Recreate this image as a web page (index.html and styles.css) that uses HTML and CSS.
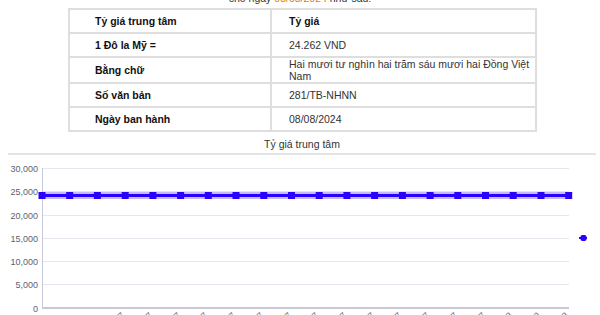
FILE: index.html
```html
<!DOCTYPE html>
<html lang="vi">
<head>
<meta charset="utf-8">
<title>Tỷ giá trung tâm</title>
<link rel="stylesheet" href="styles.css">
</head>
<body>
<p class="intro">cho ngày <span class="date">08/08/2024</span> như sau:</p>
<table class="rates">
  <colgroup><col class="c-label"><col class="c-value"></colgroup>
  <tr><th class="label">Tỷ giá trung tâm</th><th class="value">Tỷ giá</th></tr>
  <tr><th class="label">1 Đô la Mỹ =</th><td class="value">24.262 VND</td></tr>
  <tr><th class="label">Bằng chữ</th><td class="value"><span class="keep">Hai mươi tư nghìn hai trăm sáu mươi hai Đồng Việt</span> Nam</td></tr>
  <tr><th class="label">Số văn bản</th><td class="value">281/TB-NHNN</td></tr>
  <tr><th class="label">Ngày ban hành</th><td class="value">08/08/2024</td></tr>
</table>
<div class="chart-title">Tỷ giá trung tâm</div>
<svg class="chart" width="600" height="165" viewBox="0 0 600 165">
  <defs>
    <marker id="sq" markerUnits="userSpaceOnUse" markerWidth="8" markerHeight="8" refX="4" refY="4">
      <rect x="0.5" y="0.5" width="7" height="7" fill="#2a00ff"/>
    </marker>
  </defs>
  <g class="grid">
    <line x1="42" y1="13.5" x2="569" y2="13.5"/>
    <line x1="42" y1="36.5" x2="569" y2="36.5"/>
    <line x1="42" y1="60.5" x2="569" y2="60.5"/>
    <line x1="42" y1="83.5" x2="569" y2="83.5"/>
    <line x1="42" y1="106.5" x2="569" y2="106.5"/>
    <line x1="42" y1="129.5" x2="569" y2="129.5"/>
  </g>
  <line class="axis" x1="42.5" y1="13" x2="42.5" y2="153"/>
  <rect class="base" x="42" y="152" width="527" height="2"/>
  <g class="ylabels">
    <text x="38" y="17">30,000</text>
    <text x="38" y="40">25,000</text>
    <text x="38" y="63.5">20,000</text>
    <text x="38" y="86.5">15,000</text>
    <text x="38" y="110">10,000</text>
    <text x="38" y="133">5,000</text>
    <text x="38" y="156.5">0</text>
  </g>
  <polyline class="halo" points="42,40.5 69.7,40.5 97.4,40.5 125.2,40.5 152.9,40.5 180.6,40.5 208.3,40.5 236,40.5 263.8,40.5 291.5,40.5 319.2,40.5 346.9,40.5 374.6,40.5 402.4,40.5 430.1,40.5 457.8,40.5 485.5,40.5 513.2,40.5 541,40.5 568.7,40.5"/>
  <polyline class="series" marker-start="url(#sq)" marker-mid="url(#sq)" marker-end="url(#sq)" points="42,40.5 69.7,40.5 97.4,40.5 125.2,40.5 152.9,40.5 180.6,40.5 208.3,40.5 236,40.5 263.8,40.5 291.5,40.5 319.2,40.5 346.9,40.5 374.6,40.5 402.4,40.5 430.1,40.5 457.8,40.5 485.5,40.5 513.2,40.5 541,40.5 568.7,40.5"/>
  <g class="legend">
    <line x1="579" y1="83" x2="587" y2="83"/>
    <rect x="580.5" y="80" width="6" height="6" rx="2"/>
  </g>
  <g class="xlabels">
    <text transform="translate(125,161) rotate(-45)">12/07</text>
    <text transform="translate(153,161) rotate(-45)">15/07</text>
    <text transform="translate(181,161) rotate(-45)">16/07</text>
    <text transform="translate(208,161) rotate(-45)">17/07</text>
    <text transform="translate(236,161) rotate(-45)">18/07</text>
    <text transform="translate(264,161) rotate(-45)">19/07</text>
    <text transform="translate(292,161) rotate(-45)">22/07</text>
    <text transform="translate(319,161) rotate(-45)">23/07</text>
    <text transform="translate(347,161) rotate(-45)">24/07</text>
    <text transform="translate(375,161) rotate(-45)">25/07</text>
    <text transform="translate(402,161) rotate(-45)">26/07</text>
    <text transform="translate(430,161) rotate(-45)">29/07</text>
    <text transform="translate(458,161) rotate(-45)">30/07</text>
    <text transform="translate(486,161) rotate(-45)">31/07</text>
    <text transform="translate(513,161) rotate(-45)">01/08</text>
    <text transform="translate(541,161) rotate(-45)">02/08</text>
    <text transform="translate(569,161) rotate(-45)">05/08</text>
  </g>
</svg>
</body>
</html>
```
FILE: styles.css
```css
html, body {
  margin: 0;
  padding: 0;
  background: #fff;
  overflow: hidden;
}
body {
  font-family: "Liberation Sans", Arial, sans-serif;
  font-size: 10.5px;
  color: #222;
}
.intro {
  margin: -8px 0 3px;
  line-height: 13px;
  text-align: center;
  color: #333;
}
.intro .date {
  color: #e07a10;
}
.rates {
  margin-left: 68px;
  width: 469px;
  border-collapse: collapse;
  table-layout: fixed;
}
.c-label {
  width: 202px;
}
.rates th,
.rates td {
  border: 2px solid #dedede;
  height: 22px;
  line-height: 12px;
  text-align: left;
  vertical-align: middle;
}
.rates .label {
  padding: 0 6px 0 25px;
  font-weight: bold;
  color: #111;
}
.rates .value {
  padding: 0 0 0 17px;
  color: #333;
}
.rates th.value {
  font-weight: bold;
  color: #111;
}
.keep {
  white-space: nowrap;
}
.chart-title {
  margin: 6px 4px 0 8px;
  padding-bottom: 2px;
  line-height: 13px;
  text-align: center;
  color: #333;
  border-bottom: 2px solid #e4e4e4;
}
.chart {
  display: block;
}
.grid line {
  stroke: #e6e6ee;
  stroke-width: 1;
}
.axis {
  stroke: #c8c8dc;
  stroke-width: 1;
}
.base {
  fill: #c8c8d8;
}
.ylabels text {
  font-family: "Liberation Sans", Arial, sans-serif;
  font-size: 9px;
  fill: #606070;
  text-anchor: end;
}
.halo {
  fill: none;
  stroke: #8f85ff;
  stroke-opacity: 0.55;
  stroke-width: 7;
}
.series {
  fill: none;
  stroke: #2a00ff;
  stroke-width: 3;
}
.legend line {
  stroke: #2a00ff;
  stroke-width: 2;
}
.legend rect {
  fill: #2a00ff;
}
.xlabels text {
  font-family: "Liberation Sans", Arial, sans-serif;
  font-size: 9px;
  fill: #707080;
  text-anchor: end;
}
```
